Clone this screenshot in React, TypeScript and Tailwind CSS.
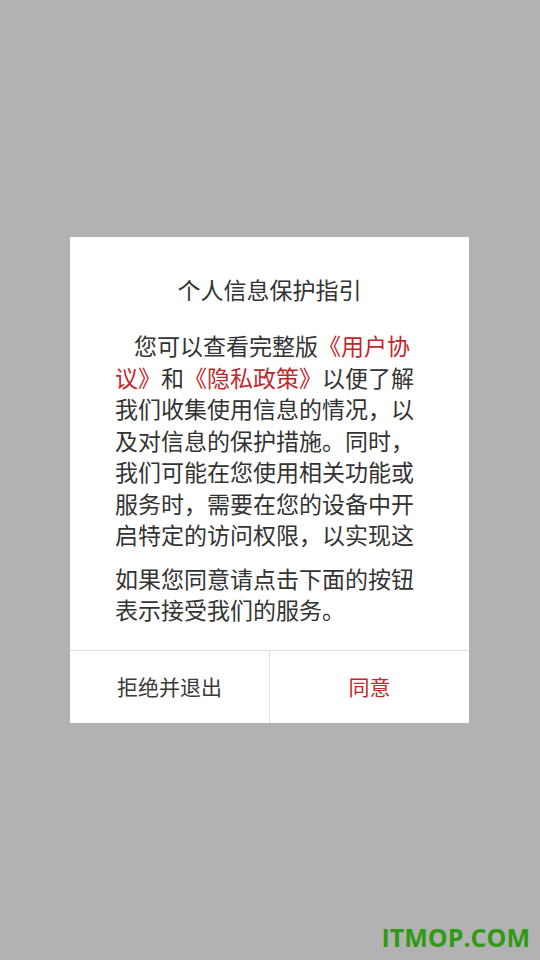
const cjk = { fontFamily: '"Noto Sans CJK SC", "Noto Sans", sans-serif' };

function Red({ children }: { children: React.ReactNode }) {
  return <span className="text-[#c1272d]">{children}</span>;
}

export default function App() {
  return (
    <div
      className="relative flex h-[960px] w-[540px] items-center bg-[#b2b2b2]"
      style={cjk}
    >
      <div className="ml-[70px] flex w-[399px] flex-col bg-white">
        <h1 className="pt-[37px] text-center text-[23px] leading-[30px] text-[#333333]">
          个人信息保护指引
        </h1>

        <div className="mt-[26px] px-[45px] pb-[24px] text-[23px] leading-[31.5px] text-[#333333]">
          <div className="whitespace-nowrap pl-[19px]">
            您可以查看完整版<Red>《用户协</Red>
          </div>
          <div className="whitespace-nowrap">
            <Red>议》</Red>和<Red>《隐私政策》</Red>以便了解
          </div>
          <div className="whitespace-nowrap">我们收集使用信息的情况，以</div>
          <div className="whitespace-nowrap">及对信息的保护措施。同时，</div>
          <div className="whitespace-nowrap">我们可能在您使用相关功能或</div>
          <div className="whitespace-nowrap">服务时，需要在您的设备中开</div>
          <div className="whitespace-nowrap">启特定的访问权限，以实现这</div>
          <div className="mt-[12px] whitespace-nowrap">如果您同意请点击下面的按钮</div>
          <div className="whitespace-nowrap">表示接受我们的服务。</div>
        </div>

        <div className="flex h-[73px] border-t border-[#e0e0e0]">
          <button
            type="button"
            className="flex flex-1 items-center justify-center border-r border-[#e0e0e0] text-[21px] text-[#3a3a3a]"
          >
            拒绝并退出
          </button>
          <button
            type="button"
            className="flex flex-1 items-center justify-center text-[21px] text-[#c1272d]"
          >
            同意
          </button>
        </div>
      </div>

      <div
        className="absolute bottom-[10px] right-[10px] text-[25px] font-bold leading-none text-[#2f9a13]"
        style={{ fontFamily: '"Open Sans", "Liberation Sans", sans-serif' }}
      >
        ITMOP.COM
      </div>
    </div>
  );
}
